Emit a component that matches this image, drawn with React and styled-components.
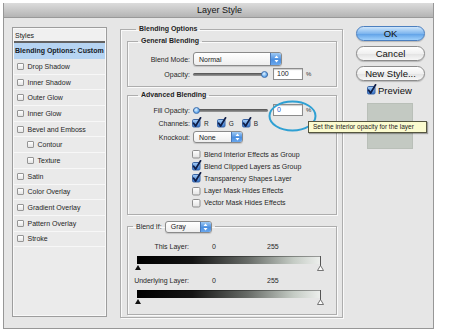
import React from 'react'
import styled, { createGlobalStyle } from 'styled-components'

const GlobalStyle = createGlobalStyle`
  html, body { margin: 0; padding: 0; background: #fff; }
  body { font-family: "Liberation Sans", Arial, sans-serif; color: #1f1f1f; }
  * { box-sizing: border-box; }
`

const Window = styled.div`
  position: relative;
  margin: 3px 0 0 3px;
  width: 431px;
  height: 326px;
  background: #e6e6e6;
  border: 1px solid #979797;
  border-top: none;
  box-shadow: 0 1px 0 #6e6e6e;
  display: flex;
  flex-direction: column;
`
const TitleBar = styled.div`
  height: 15px;
  background: linear-gradient(#dcdcdc, #b4b4b4);
  border-bottom: 1px solid #999;
  display: flex;
  align-items: center;
  justify-content: center;
  font-size: 9px;
  color: #151515;
  padding-left: 2px;
`
const DialogBody = styled.div`
  flex: 1;
  display: flex;
  padding: 6px 0 0 8px;
`

/* ---------- left list ---------- */
const StylesList = styled.div`
  flex-shrink: 0;
  width: 95px;
  height: 290px;
  margin-top: 3px;
  padding: 1px;
  border: 1px solid #9d9d9d;
  background: #ebebeb;
  box-shadow: inset 0 0 0 1px #f8f8f8;
  display: flex;
  flex-direction: column;
`
const StyleHeader = styled.div`
  height: 14px;
  display: flex;
  align-items: center;
  padding-left: 1px;
  font-size: 7px;
  color: #222;
  background: #f0f0f0;
  border-bottom: 2px solid #626262;
`
const StyleRow = styled.div`
  height: ${p => (p.$active ? '16px' : '15.7px')};
  display: flex;
  align-items: center;
  gap: 3.5px;
  padding-left: ${p => (p.$active ? 1 : p.$indent ? 13 : 3)}px;
  font-size: 7px;
  font-weight: ${p => (p.$active ? 'bold' : 'normal')};
  color: ${p => (p.$active ? '#151a26' : '#262626')};
  background: ${p => (p.$active ? '#b6d4f2' : '#eaeaea')};
  border-bottom: 1px solid ${p => (p.$active ? '#b6d4f2' : '#f7f7f7')};
`
const SmallBox = styled.span`
  width: 7px;
  height: 7px;
  border: 1px solid #959595;
  border-radius: 1px;
  background: linear-gradient(#fff, #e4e4e4);
`

/* ---------- fieldsets ---------- */
const Group = styled.fieldset`
  margin: ${p => p.$mt || 0}px 0 0 ${p => p.$ml || 0}px;
  min-width: 0;
  width: ${p => p.$w}px;
  height: ${p => (p.$h ? `${p.$h}px` : 'auto')};
  padding: ${p => p.$pad};
  border: 1px solid #adadad;
  box-shadow: 1px 1px 0 #fafafa, inset 1px 1px 0 #fafafa;
  flex-shrink: 0;
`
const Legend = styled.legend`
  margin-left: ${p => p.$ml}px;
  padding: 0 3px;
  height: ${p => p.$h || 10}px;
  line-height: ${p => p.$h || 10}px;
  font-size: 7px;
  font-weight: bold;
  color: #1e1e1e;
  display: flex;
  align-items: center;
  gap: 3px;
`
const LegendText = styled.span`
  font-weight: normal;
  color: #262626;
`
const FieldRow = styled.div`
  display: grid;
  grid-template-columns: 62px auto;
  column-gap: 3px;
  align-items: center;
  height: ${p => p.$h}px;
  margin-top: ${p => p.$mt || 0}px;
`
const FieldLabel = styled.span`
  text-align: right;
  font-size: 7px;
  color: #262626;
  white-space: nowrap;
`
const Controls = styled.div`
  display: flex;
  align-items: center;
  margin-left: ${p => p.$ml || 0}px;
`

/* select */
const SelectBox = styled.div`
  width: ${p => p.$w}px;
  height: ${p => p.$h}px;
  border: 1px solid #8a8a8a;
  border-radius: 3px;
  background: linear-gradient(#ffffff, #eeeeee);
  display: flex;
  align-items: stretch;
  overflow: hidden;
  box-shadow: 0 1px 1px rgba(0, 0, 0, 0.15);
`
const SelectValue = styled.span`
  flex: 1;
  display: flex;
  align-items: center;
  padding-left: 5px;
  font-size: 7px;
  font-weight: normal;
  color: #1a1a1a;
`
const Stepper = styled.span`
  width: 11px;
  background: linear-gradient(#9fcaf5, #4b8fe0 55%, #6aa8ee);
  border-left: 1px solid #4a78b8;
  display: flex;
  align-items: center;
  justify-content: center;
`

/* slider */
const SliderTrack = styled.div`
  width: ${p => p.$w}px;
  height: 3px;
  border-radius: 2px;
  background: linear-gradient(#4e4e4e, #9c9c9c);
  display: flex;
  align-items: center;
  justify-content: ${p => (p.$at === 'end' ? 'flex-end' : 'flex-start')};
`
const Knob = styled.span`
  width: 7px;
  height: 7px;
  flex-shrink: 0;
  border-radius: 50%;
  border: 1px solid #3d6fae;
  background: radial-gradient(circle at 40% 35%, #e4f3ff, #6fb0ef 60%, #3b7fcf);
`
const NumberInput = styled.div`
  width: 30px;
  height: 12px;
  margin-left: 5px;
  border: 1px solid #8c8c8c;
  background: #fff;
  box-shadow: inset 0 1px 1px rgba(0, 0, 0, 0.2);
  font-size: 7px;
  line-height: 10px;
  padding-left: 3px;
  color: ${p => (p.$focus ? '#2356c9' : '#1a1a1a')};
`
const Percent = styled.span`
  font-size: 6px;
  color: #333;
  margin-left: 3px;
`
const ChannelItem = styled.span`
  display: flex;
  align-items: center;
  gap: 4px;
  font-size: 6.5px;
  color: #262626;
  margin-right: 8px;
`
const CheckList = styled.div`
  margin-top: 4px;
  padding-left: 64px;
  display: flex;
  flex-direction: column;
`
const CheckRow = styled.div`
  height: 12.2px;
  display: flex;
  align-items: center;
  gap: 4px;
  font-size: 7px;
  color: #262626;
`

/* blend if */
const RangeRow = styled.div`
  display: grid;
  grid-template-columns: 61px 78px auto;
  align-items: center;
  height: 10px;
  margin-top: ${p => p.$mt}px;
  font-size: 7px;
  color: #262626;
`
const RangeLabel = styled.span`
  text-align: right;
  white-space: nowrap;
`
const RangeValue = styled.span`
  padding-left: ${p => p.$pl || 0}px;
`
const RampWrap = styled.div`
  margin: ${p => p.$mt}px 0 0 7px;
  height: 15px;
  line-height: 0;
`

/* ---------- right column ---------- */
const SideColumn = styled.div`
  flex: 1;
  padding: 2px 0 0 13px;
  display: flex;
  flex-direction: column;
`
const AquaButton = styled.div`
  width: 69px;
  height: 15px;
  margin-bottom: 5px;
  border-radius: 8px;
  border: 1px solid ${p => (p.$primary ? '#4b7fbf' : '#8c8c8c')};
  background: ${p =>
    p.$primary
      ? 'linear-gradient(#cfe6fb, #7fb6ee 50%, #5c9fe6 51%, #9fd0fb)'
      : 'linear-gradient(#ffffff, #f0f0f0 50%, #e2e2e2 51%, #f7f7f7)'};
  box-shadow: 0 1px 1px rgba(0, 0, 0, 0.2);
  display: flex;
  align-items: center;
  justify-content: center;
  font-size: 9.5px;
  color: #111;
`
const PreviewToggle = styled.div`
  margin: -1px 0 0 11px;
  height: 10px;
  display: flex;
  align-items: center;
  gap: 3px;
  font-size: 9.5px;
  color: #111;
`
const PreviewSwatch = styled.div`
  margin: 8px 0 0 11px;
  width: 46px;
  height: 46px;
  background: #c3c9c2;
  border: 1px solid #b9bfb8;
`

/* ---------- overlays ---------- */
const Highlight = styled.svg`
  position: absolute;
  left: 264px;
  top: 97px;
  overflow: visible;
`
const Tooltip = styled.div`
  position: absolute;
  left: 304px;
  top: 118px;
  width: 119px;
  height: 12px;
  background: #fbfbcf;
  border: 1px solid #55553f;
  box-shadow: 1px 1px 1px rgba(0, 0, 0, 0.3);
  font-size: 6.5px;
  line-height: 10px;
  padding-left: 4px;
  color: #1a1a1a;
  white-space: nowrap;
`

function Arrows() {
  return (
    <svg width="5" height="8" viewBox="0 0 5 8">
      <path d="M2.5 0.5 L4.5 3 H0.5 Z M2.5 7.5 L4.5 5 H0.5 Z" fill="#fff" />
    </svg>
  )
}

function Select({ value, w, h }) {
  return (
    <SelectBox $w={w} $h={h}>
      <SelectValue>{value}</SelectValue>
      <Stepper><Arrows /></Stepper>
    </SelectBox>
  )
}

function Check({ on }) {
  return (
    <svg width="8" height="8" viewBox="0 0 8 8" style={{ overflow: 'visible', flexShrink: 0 }}>
      <defs>
        <linearGradient id="boxBlue" x1="0" y1="0" x2="0" y2="1">
          <stop offset="0" stopColor="#a9d0f7" />
          <stop offset="1" stopColor="#2f72cf" />
        </linearGradient>
        <linearGradient id="boxWhite" x1="0" y1="0" x2="0" y2="1">
          <stop offset="0" stopColor="#ffffff" />
          <stop offset="1" stopColor="#e2e2e2" />
        </linearGradient>
      </defs>
      <rect x="0.5" y="0.5" width="7.5" height="7.5" rx="1.2"
        fill={on ? 'url(#boxBlue)' : 'url(#boxWhite)'}
        stroke={on ? '#3b64a3' : '#8d8d8d'} />
      {on && (
        <path d="M1.6 4.2 L3.6 7 L8.6 -1.2" fill="none" stroke="#0e1c45"
          strokeWidth="1.7" strokeLinecap="round" strokeLinejoin="round" />
      )}
    </svg>
  )
}

function Ramp({ id }) {
  return (
    <svg width="190" height="15" viewBox="0 0 190 15">
      <defs>
        <linearGradient id={id} x1="0" y1="0" x2="1" y2="0">
          <stop offset="0" stopColor="#000" />
          <stop offset="0.3" stopColor="#141414" />
          <stop offset="0.6" stopColor="#666a66" />
          <stop offset="0.85" stopColor="#c4cbc4" />
          <stop offset="1" stopColor="#eef0ee" />
        </linearGradient>
      </defs>
      <rect x="2" y="0" width="184" height="8" fill={`url(#${id})`} />
      <rect x="2" y="0" width="184" height="1" fill="#000" opacity="0.35" />
      <line x1="185.5" y1="0" x2="185.5" y2="10" stroke="#555" strokeWidth="1" />
      <path d="M3 9 L6 14 H0 Z" fill="#111" />
      <path d="M185.5 9.5 L188.5 14.5 H182.5 Z" fill="#fff" stroke="#555" strokeWidth="0.8" />
    </svg>
  )
}

const styleItems = [
  ['Drop Shadow'], ['Inner Shadow'], ['Outer Glow'], ['Inner Glow'],
  ['Bevel and Emboss'], ['Contour', true], ['Texture', true], ['Satin'],
  ['Color Overlay'], ['Gradient Overlay'], ['Pattern Overlay'], ['Stroke'],
]

const advancedChecks = [
  ['Blend Interior Effects as Group', false],
  ['Blend Clipped Layers as Group', true],
  ['Transparency Shapes Layer', true],
  ['Layer Mask Hides Effects', false],
  ['Vector Mask Hides Effects', false],
]

export default function App() {
  return (
    <>
      <GlobalStyle />
      <Window>
        <TitleBar>Layer Style</TitleBar>
        <DialogBody>
          <StylesList>
            <StyleHeader>Styles</StyleHeader>
            <StyleRow $active>Blending Options: Custom</StyleRow>
            {styleItems.map(([name, indent]) => (
              <StyleRow key={name} $indent={indent}>
                <SmallBox />
                {name}
              </StyleRow>
            ))}
          </StylesList>

          <Group $w={223} $h={294} $ml={13} $pad="2px 5px 5px 6px">
            <Legend $ml={9}>Blending Options</Legend>

            <Group $w={210} $pad="6px 0 6px 0">
              <Legend $ml={10}>General Blending</Legend>
              <FieldRow $h={14}>
                <FieldLabel>Blend Mode:</FieldLabel>
                <Select value="Normal" w={89} h={14} />
              </FieldRow>
              <FieldRow $h={12} $mt={2}>
                <FieldLabel>Opacity:</FieldLabel>
                <Controls>
                  <SliderTrack $w={75} $at="end"><Knob /></SliderTrack>
                  <NumberInput>100</NumberInput>
                  <Percent>%</Percent>
                </Controls>
              </FieldRow>
            </Group>

            <Group $w={210} $mt={3} $pad="4px 0 5px 0">
              <Legend $ml={10}>Advanced Blending</Legend>
              <FieldRow $h={12}>
                <FieldLabel>Fill Opacity:</FieldLabel>
                <Controls>
                  <SliderTrack $w={75} $at="start"><Knob /></SliderTrack>
                  <NumberInput $focus>0</NumberInput>
                  <Percent>%</Percent>
                </Controls>
              </FieldRow>
              <FieldRow $h={10} $mt={2}>
                <FieldLabel>Channels:</FieldLabel>
                <Controls $ml={-1}>
                  <ChannelItem><Check on />R</ChannelItem>
                  <ChannelItem><Check on />G</ChannelItem>
                  <ChannelItem><Check on />B</ChannelItem>
                </Controls>
              </FieldRow>
              <FieldRow $h={14} $mt={2}>
                <FieldLabel>Knockout:</FieldLabel>
                <Select value="None" w={50} h={12} />
              </FieldRow>
              <CheckList>
                {advancedChecks.map(([label, on]) => (
                  <CheckRow key={label}><Check on={on} />{label}</CheckRow>
                ))}
              </CheckList>
            </Group>

            <Group $w={210} $mt={6} $pad="9px 0 9px 0">
              <Legend $ml={5} $h={12}>
                <LegendText>Blend If:</LegendText>
                <Select value="Gray" w={47} h={12} />
              </Legend>
              <RangeRow $mt={0}>
                <RangeLabel>This Layer:</RangeLabel>
                <RangeValue $pl={23}>0</RangeValue>
                <RangeValue>255</RangeValue>
              </RangeRow>
              <RampWrap $mt={4}><Ramp id="rampThis" /></RampWrap>
              <RangeRow $mt={5}>
                <RangeLabel>Underlying Layer:</RangeLabel>
                <RangeValue $pl={23}>0</RangeValue>
                <RangeValue>255</RangeValue>
              </RangeRow>
              <RampWrap $mt={4}><Ramp id="rampUnder" /></RampWrap>
            </Group>
          </Group>

          <SideColumn>
            <AquaButton $primary>OK</AquaButton>
            <AquaButton>Cancel</AquaButton>
            <AquaButton>New Style...</AquaButton>
            <PreviewToggle><Check on />Preview</PreviewToggle>
            <PreviewSwatch />
          </SideColumn>
        </DialogBody>

        <Highlight width="49" height="32" viewBox="0 0 49 32">
          <ellipse cx="24.5" cy="16" rx="23" ry="14.5" fill="none" stroke="#2fa0d3" strokeWidth="2" />
        </Highlight>
        <Tooltip>Set the interior opacity for the layer</Tooltip>
      </Window>
    </>
  )
}
